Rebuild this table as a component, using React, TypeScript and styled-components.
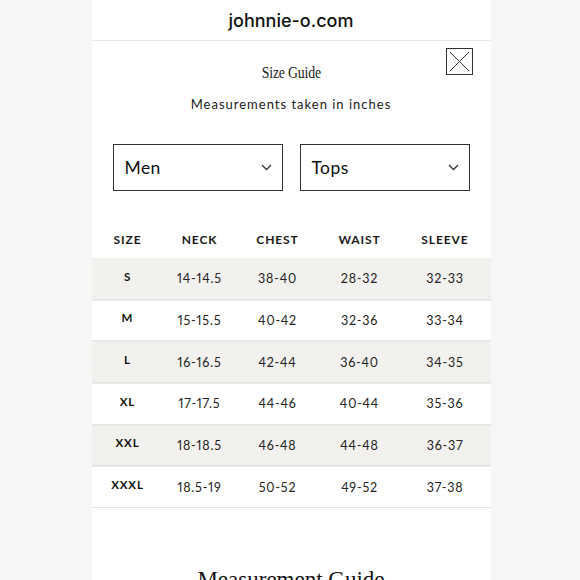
import React from 'react';
import styled, { createGlobalStyle } from 'styled-components';

const GlobalStyle = createGlobalStyle`
  html, body {
    margin: 0;
    padding: 0;
    background: #f7f7f7;
    overflow: hidden;
  }
`;

const Page = styled.div`
  width: 580px;
  height: 580px;
  display: flex;
  justify-content: center;
  align-items: flex-start;
  background: radial-gradient(circle at 50% 45%, #f9f8f7 0%, #f6f6f6 70%);
  overflow: hidden;
`;

const Panel = styled.div`
  width: 399px;
  margin-left: 2px;
  min-height: 580px;
  background: #fff;
  display: flex;
  flex-direction: column;
  flex-shrink: 0;
  color: #1a1a1a;
  font-family: Lato, "Open Sans", sans-serif;
`;

const SiteBar = styled.div`
  flex-shrink: 0;
  height: 39px;
  border-bottom: 1.5px solid #e6e6e6;
  display: flex;
  align-items: center;
  justify-content: center;
  font-family: Inter, "Liberation Sans", sans-serif;
  font-weight: 500;
  font-size: 18px;
  color: #111;
  padding-top: 1px;
`;

const Modal = styled.div`
  position: relative;
  flex-shrink: 0;
  display: flex;
  flex-direction: column;
  align-items: center;
`;

const CloseButton = styled.button`
  position: absolute;
  top: 7px;
  right: 18px;
  width: 27px;
  height: 27px;
  padding: 0;
  border: 1.2px solid #333;
  background: #fff;
  display: flex;
  align-items: center;
  justify-content: center;
`;

const Title = styled.h2`
  margin: 23px 0 0;
  font-family: "Liberation Serif", serif;
  font-weight: 400;
  font-size: 16px;
  letter-spacing: -0.2px;
  transform: scaleX(0.86);
  color: #222;
`;

const Subtitle = styled.p`
  margin: 14px 0 0;
  font-size: 13px;
  letter-spacing: 1px;
  color: #1a1a1a;
`;

const Filters = styled.div`
  align-self: stretch;
  display: grid;
  grid-template-columns: 1fr 1fr;
  gap: 17px;
  padding: 0 21px;
  margin-top: 32px;
`;

const SelectBox = styled.div`
  height: 47px;
  box-sizing: border-box;
  border: 1.5px solid #333;
  display: flex;
  align-items: center;
  justify-content: space-between;
  padding: 0 10px 0 11px;
  font-size: 17.5px;
  letter-spacing: 0.4px;
  color: #111;
`;

const Table = styled.div`
  align-self: stretch;
  margin-top: 34px;
`;

const Row = styled.div<{ $shaded?: boolean; $head?: boolean }>`
  display: grid;
  grid-template-columns: 72px 72px 84px 80px 91px;
  height: ${(p) => (p.$head ? '33px' : '41.67px')};
  box-sizing: border-box;
  align-items: center;
  border-bottom: ${(p) => (p.$head ? '0' : '1.5px solid #e3e3e3')};
  border-top: ${(p) => (p.$head ? '0' : '0.5px solid #ececec')};
  background: ${(p) => (p.$shaded ? '#f2f1ee' : '#fff')};
`;

const HeadCell = styled.div`
  text-align: center;
  font-weight: 700;
  font-size: 12px;
  letter-spacing: 0.9px;
  color: #1a1a1a;
  padding-bottom: 4px;
`;

const SizeCell = styled.div`
  text-align: center;
  font-weight: 700;
  font-size: 11.5px;
  letter-spacing: 0.9px;
  color: #111;
  margin-top: -5px;
`;

const Cell = styled.div`
  text-align: center;
  font-size: 12.5px;
  letter-spacing: 0.8px;
  font-variant-numeric: proportional-nums;
  color: #222;
`;

const SectionTitle = styled.h2`
  margin: 59px 0 0;
  font-family: "Liberation Serif", serif;
  font-weight: 400;
  font-size: 23px;
  color: #111;
  text-align: center;
`;

const Chevron = () => (
  <svg width="11" height="7" viewBox="0 0 11 7">
    <path d="M1 1 L5.5 5.5 L10 1" fill="none" stroke="#333" strokeWidth="1.3" />
  </svg>
);

const CloseIcon = () => (
  <svg width="21" height="21" viewBox="0 0 21 21">
    <path d="M1 1 L20 20 M20 1 L1 20" stroke="#333" strokeWidth="1" />
  </svg>
);

const headers = ['SIZE', 'NECK', 'CHEST', 'WAIST', 'SLEEVE'];

const sizes = [
  ['S', '14-14.5', '38-40', '28-32', '32-33'],
  ['M', '15-15.5', '40-42', '32-36', '33-34'],
  ['L', '16-16.5', '42-44', '36-40', '34-35'],
  ['XL', '17-17.5', '44-46', '40-44', '35-36'],
  ['XXL', '18-18.5', '46-48', '44-48', '36-37'],
  ['XXXL', '18.5-19', '50-52', '49-52', '37-38'],
];

export default function App() {
  return (
    <>
      <GlobalStyle />
      <Page>
        <Panel>
          <SiteBar>johnnie-o.com</SiteBar>
          <Modal>
            <CloseButton aria-label="Close">
              <CloseIcon />
            </CloseButton>
            <Title>Size Guide</Title>
            <Subtitle>Measurements taken in inches</Subtitle>
            <Filters>
              <SelectBox>
                Men
                <Chevron />
              </SelectBox>
              <SelectBox>
                Tops
                <Chevron />
              </SelectBox>
            </Filters>
            <Table>
              <Row $head>
                {headers.map((h) => (
                  <HeadCell key={h}>{h}</HeadCell>
                ))}
              </Row>
              {sizes.map(([size, ...vals], i) => (
                <Row key={size} $shaded={i % 2 === 0}>
                  <SizeCell>{size}</SizeCell>
                  {vals.map((v, j) => (
                    <Cell key={j}>{v}</Cell>
                  ))}
                </Row>
              ))}
            </Table>
            <SectionTitle>Measurement Guide</SectionTitle>
          </Modal>
        </Panel>
      </Page>
    </>
  );
}
